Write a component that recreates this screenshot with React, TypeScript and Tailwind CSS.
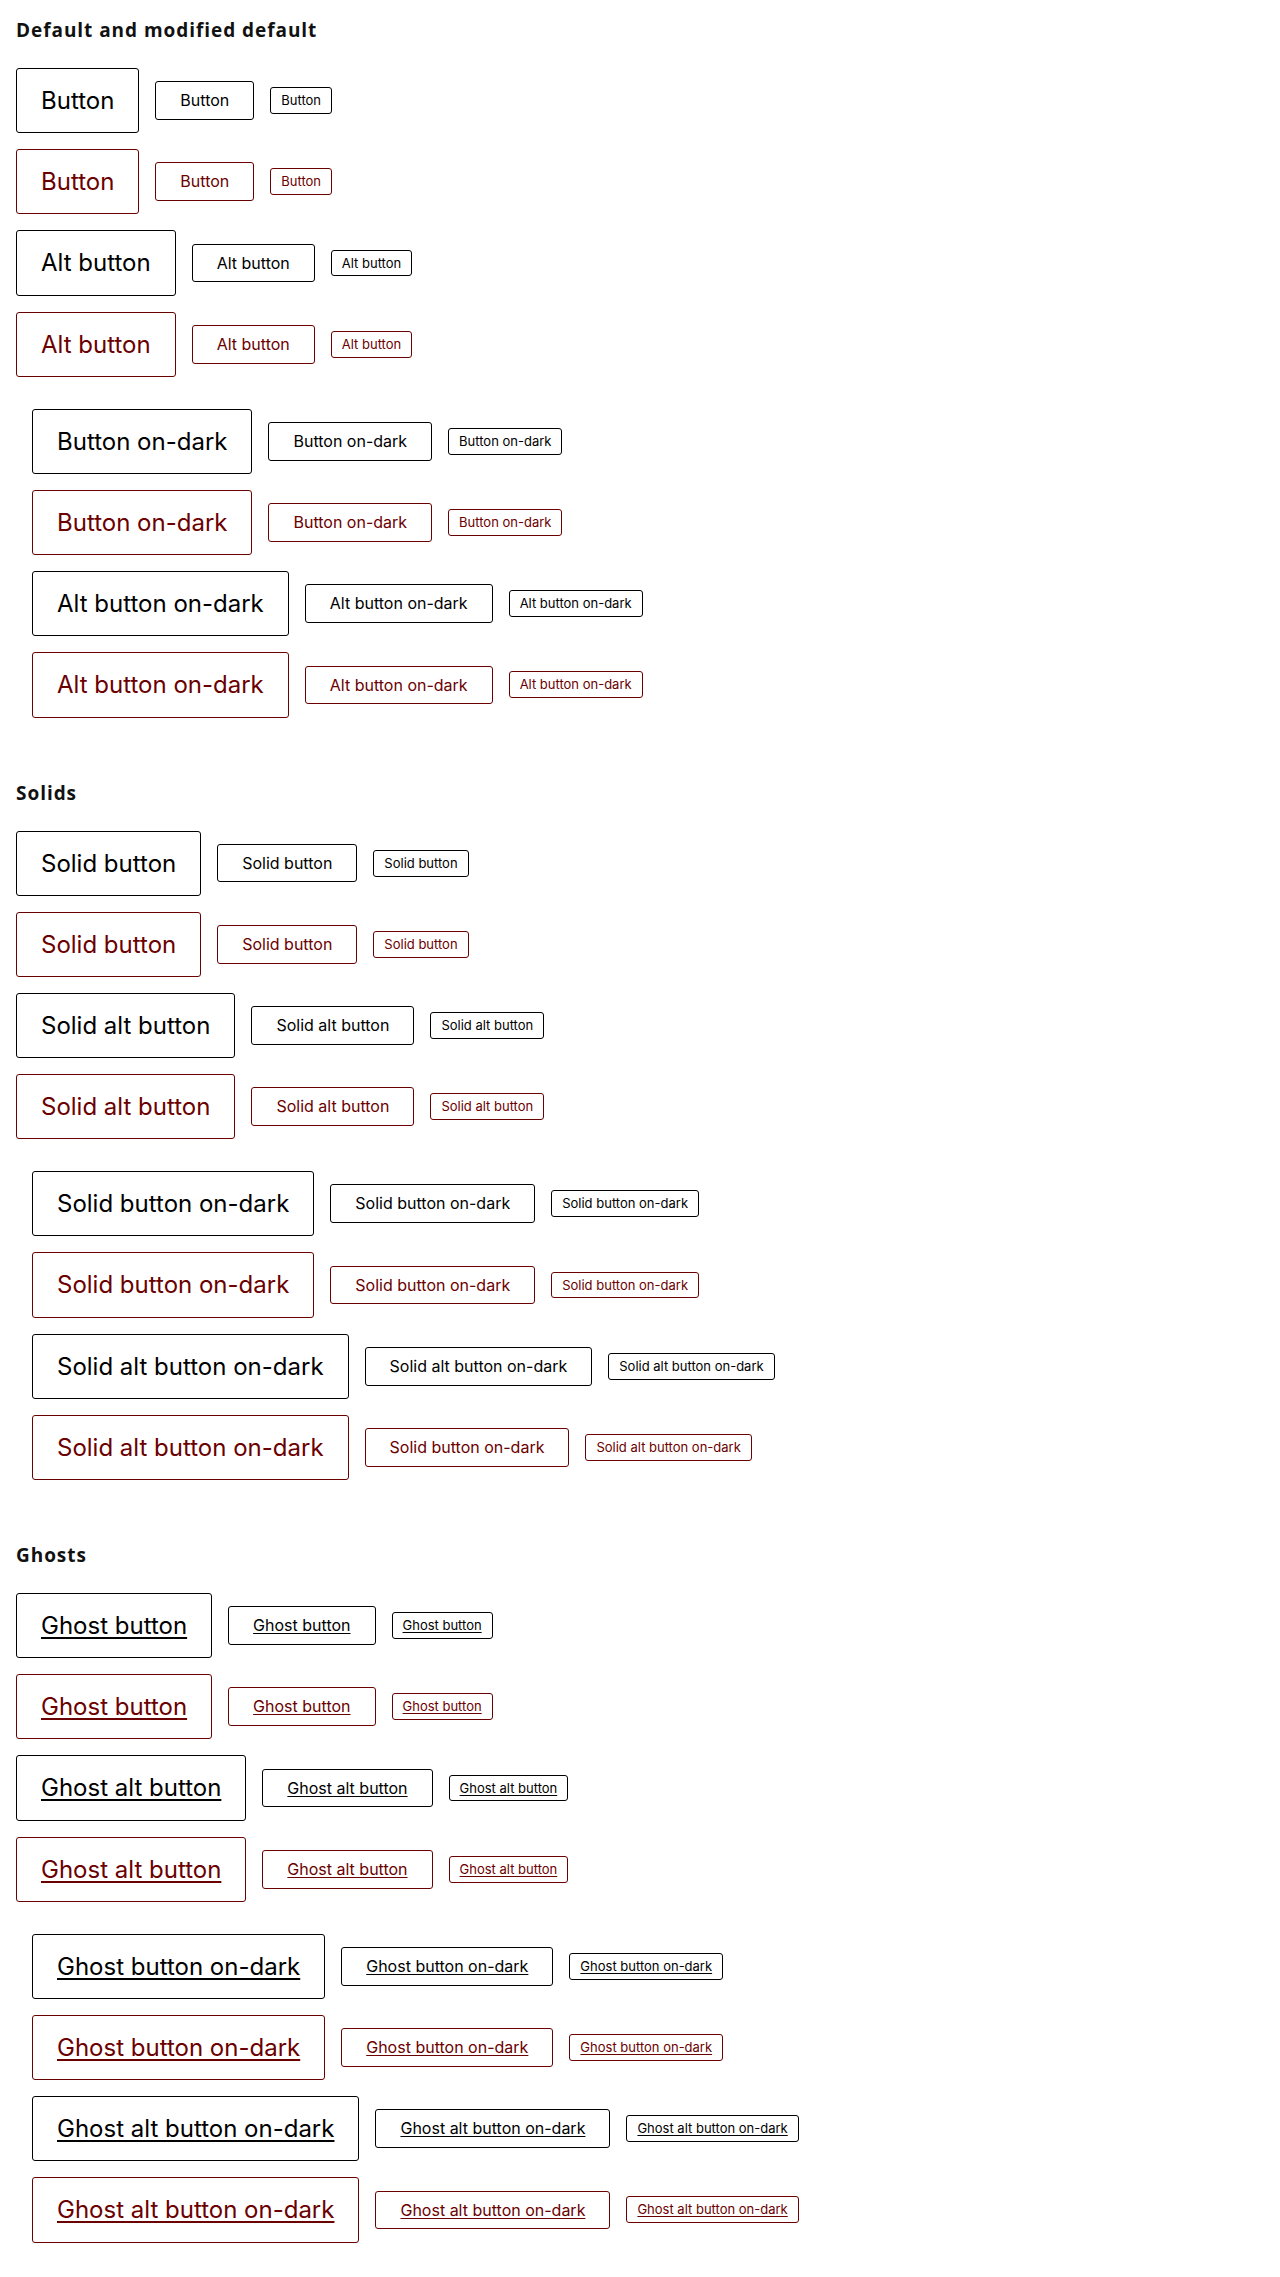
import React from "react";

type Size = "lg" | "md" | "sm";
type Tone = "dark" | "red";

const sizeCls: Record<Size, string> = {
  lg: "text-[24px] leading-[1.3] px-6 py-4",
  md: "text-[16px] leading-[1.3] px-6 py-2",
  sm: "text-[13px] leading-[1.3] px-[10px] py-1",
};

const toneCls: Record<Tone, string> = {
  dark: "text-black border-black",
  red: "text-[#6b0000] border-[#6b0000]",
};

function Btn({ label, size, tone, ghost }: { label: string; size: Size; tone: Tone; ghost?: boolean }) {
  const deco = ghost
    ? size === "lg"
      ? "underline decoration-[2px] underline-offset-[3px]"
      : "underline underline-offset-[2px]"
    : "";
  return (
    <button
      type="button"
      className={`inline-block shrink-0 whitespace-nowrap rounded-[3px] border bg-white font-normal ${sizeCls[size]} ${toneCls[tone]} ${deco}`}
    >
      {label}
    </button>
  );
}

type RowSpec = { tone: Tone; labels: [string, string, string] };

function Row({ spec, ghost }: { spec: RowSpec; ghost?: boolean }) {
  return (
    <div className="flex items-center gap-4">
      <Btn label={spec.labels[0]} size="lg" tone={spec.tone} ghost={ghost} />
      <Btn label={spec.labels[1]} size="md" tone={spec.tone} ghost={ghost} />
      <Btn label={spec.labels[2]} size="sm" tone={spec.tone} ghost={ghost} />
    </div>
  );
}

function same(tone: Tone, l: string): RowSpec {
  return { tone, labels: [l, l, l] };
}

type SectionSpec = { title: string; ghost?: boolean; rows: RowSpec[]; dark: RowSpec[] };

const sections: SectionSpec[] = [
  {
    title: "Default and modified default",
    rows: [same("dark", "Button"), same("red", "Button"), same("dark", "Alt button"), same("red", "Alt button")],
    dark: [
      same("dark", "Button on-dark"),
      same("red", "Button on-dark"),
      same("dark", "Alt button on-dark"),
      same("red", "Alt button on-dark"),
    ],
  },
  {
    title: "Solids",
    rows: [
      same("dark", "Solid button"),
      same("red", "Solid button"),
      same("dark", "Solid alt button"),
      same("red", "Solid alt button"),
    ],
    dark: [
      same("dark", "Solid button on-dark"),
      same("red", "Solid button on-dark"),
      same("dark", "Solid alt button on-dark"),
      { tone: "red", labels: ["Solid alt button on-dark", "Solid button on-dark", "Solid alt button on-dark"] },
    ],
  },
  {
    title: "Ghosts",
    ghost: true,
    rows: [
      same("dark", "Ghost button"),
      same("red", "Ghost button"),
      same("dark", "Ghost alt button"),
      same("red", "Ghost alt button"),
    ],
    dark: [
      same("dark", "Ghost button on-dark"),
      same("red", "Ghost button on-dark"),
      same("dark", "Ghost alt button on-dark"),
      same("red", "Ghost alt button on-dark"),
    ],
  },
];

export default function App() {
  return (
    <div className="min-h-screen w-full bg-white px-4 pt-4 pb-[17px] font-[Inter,sans-serif] text-black">
      <div className="flex flex-col gap-[45px]">
        {sections.map((s) => (
          <section key={s.title} className="flex flex-col">
            <h2 className="mb-6 font-['Open_Sans',sans-serif] text-[19px] font-bold leading-[28px] tracking-[0.05em] text-[#111]">
              {s.title}
            </h2>
            <div className="flex flex-col gap-4">
              {s.rows.map((r, i) => (
                <Row key={i} spec={r} ghost={s.ghost} />
              ))}
            </div>
            <div className="mt-4 flex flex-col gap-4 p-4">
              {s.dark.map((r, i) => (
                <Row key={i} spec={r} ghost={s.ghost} />
              ))}
            </div>
          </section>
        ))}
      </div>
    </div>
  );
}
